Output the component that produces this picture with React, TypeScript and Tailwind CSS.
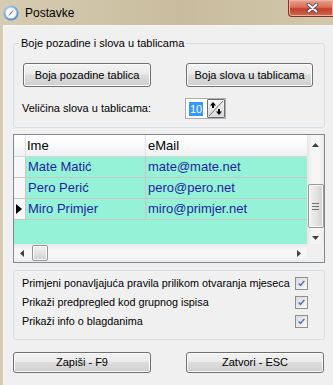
import { FC } from 'react'

const Btn: FC<{ label: string; className: string }> = ({ label, className }) => (
  <div
    className={`flex items-center justify-center border border-[#707070] rounded-[3px] bg-[linear-gradient(#f2f2f2,#ebebeb_45%,#dddddd_50%,#cfcfcf)] shadow-[inset_0_0_0_1px_#fbfbfb] text-[11px] text-black whitespace-nowrap ${className}`}
  >
    {label}
  </div>
)

const Check: FC = () => (
  <span className="flex w-[13px] h-[13px] border border-[#8e8f8f] bg-[linear-gradient(135deg,#d8dbe0,#f7f8f9)] p-[1px]">
    <svg viewBox="0 0 11 11" className="w-full h-full">
      <path d="M2 5.5 L4.3 8 L9 2.3" stroke="#4e6aa8" strokeWidth="1.7" fill="none" />
    </svg>
  </span>
)

const rows = [
  { ime: 'Mate Matić', mail: 'mate@mate.net' },
  { ime: 'Pero Perić', mail: 'pero@pero.net' },
  { ime: 'Miro Primjer', mail: 'miro@primjer.net', current: true },
]

const App: FC = () => {
  return (
    <div className="w-[333px] h-[385px] overflow-hidden flex flex-col bg-[linear-gradient(90deg,#d6ccb2,#c9bc9e_55%,#d2c7ac)] font-['Liberation_Sans',sans-serif] text-black">
      {/* title bar */}
      <div className="h-[25px] shrink-0 flex items-start relative">
        <svg viewBox="0 0 16 16" className="w-[16px] h-[16px] ml-[3px] mt-[5px]">
          <defs>
            <radialGradient id="rim" cx="0.4" cy="0.35" r="0.7">
              <stop offset="0" stopColor="#d8ecff" />
              <stop offset="1" stopColor="#3f7fd0" />
            </radialGradient>
          </defs>
          <circle cx="8" cy="8" r="7.5" fill="url(#rim)" />
          <circle cx="8" cy="8" r="5.6" fill="#f7fbff" stroke="#9cc2ea" strokeWidth="0.6" />
          <path d="M11 4.5 L8.4 8.4 L7.6 7.6 Z" fill="#d23b2b" />
          <path d="M5 11.5 L7.6 7.6 L8.4 8.4 Z" fill="#3a6fc0" />
        </svg>
        <span className="ml-[6px] mt-[5px] text-[12px] leading-[16px] text-black">Postavke</span>
        <div className="absolute left-[288px] top-0 w-[46px] h-[17px] rounded-bl-[4px] border border-t-0 border-[#7d3427] bg-[linear-gradient(#e8a08f,#d9705a_45%,#c2402a_55%,#d3684e)] shadow-[inset_0_0_0_1px_#f0b2a2] flex items-center justify-center">
          <svg viewBox="0 0 12 10" className="w-[13px] h-[10px] ml-[2px]">
            <path d="M2 1.5 L10 8.5 M10 1.5 L2 8.5" stroke="#3d3d4a" strokeWidth="3.6" strokeLinecap="round" />
            <path d="M2 1.5 L10 8.5 M10 1.5 L2 8.5" stroke="#ffffff" strokeWidth="2" strokeLinecap="round" />
          </svg>
        </div>
      </div>

      {/* body */}
      <div className="flex-1 flex pl-[3px]">
        <div className="flex-1 bg-[#f0f0f0] border-l border-t border-[#f7f5f0] flex flex-col">
          {/* group 1 */}
          <div className="relative ml-[9px] mt-[17px] w-[312px] h-[85px] border border-[#d5dfe5] rounded-[3px] flex flex-col">
            <span className="absolute left-[5px] top-[-8px] px-[2px] bg-[#f0f0f0] text-[11px] leading-[14px] whitespace-nowrap">
              Boje pozadine i slova u tablicama
            </span>
            <div className="flex mt-[19px]">
              <Btn label="Boja pozadine tablica" className="ml-[9px] w-[128px] h-[24px]" />
              <Btn label="Boja slova u tablicama" className="ml-[35px] w-[127px] h-[24px]" />
            </div>
            <div className="flex items-center mt-[11px]">
              <span className="ml-[8px] w-[163px] text-[11px] whitespace-nowrap">Veličina slova u tablicama:</span>
              <div className="w-[41px] h-[21px] border border-[#abadb3] bg-white flex items-center pl-[3px]">
                <span className="bg-[#3399ff] text-white text-[11px] leading-[14px] px-[1px]">10</span>
                <div className="ml-auto w-[18px] h-[19px] border border-[#6f6f6f] rounded-[1px] bg-[linear-gradient(#f4f4f4,#dadada)]">
                  <svg viewBox="0 0 16 17" className="w-full h-full">
                    <path d="M1 16 L15 1" stroke="#707070" strokeWidth="1" />
                    <path d="M5 2 L8 5.5 L6 5.5 L6 8 L4 8 L4 5.5 L2 5.5 Z" fill="#000" />
                    <path d="M11 15 L8 11.5 L10 11.5 L10 9 L12 9 L12 11.5 L14 11.5 Z" fill="#000" />
                  </svg>
                </div>
              </div>
            </div>
          </div>

          {/* grid */}
          <div className="ml-[9px] mt-[6px] w-[312px] h-[129px] border border-[#828790] flex flex-col bg-[#95f2d6]">
            <div className="flex flex-1 min-h-0">
              <div className="flex-1 flex flex-col">
                <div className="h-[22px] flex bg-[linear-gradient(#ffffff,#f7f8f9_60%,#eef0f2)] border-b border-[#d5d5d5] text-[13px]">
                  <div className="w-[12px] border-r border-[#e2e2e2]" />
                  <div className="w-[120px] border-r border-[#e2e2e2] pl-[1px] flex items-center">Ime</div>
                  <div className="flex-1 pl-[2px] flex items-center">eMail</div>
                </div>
                {rows.map((r) => (
                  <div key={r.ime} className="h-[21px] flex border-b border-[#c4c9c7] text-[13px] text-[#1f1fa0]">
                    <div className="w-[12px] bg-[#f7f7f7] border-r border-[#c4c9c7] flex items-center">
                      {r.current && (
                        <svg viewBox="0 0 6 10" className="w-[6px] h-[10px] ml-[2px]">
                          <path d="M0 0 L6 5 L0 10 Z" fill="#000" />
                        </svg>
                      )}
                    </div>
                    <div className="w-[120px] border-r border-[#c4c9c7] pl-[2px] flex items-center">{r.ime}</div>
                    <div className="flex-1 pl-[2px] flex items-center">{r.mail}</div>
                  </div>
                ))}
              </div>
              {/* vertical scrollbar */}
              <div className="w-[17px] bg-[linear-gradient(90deg,#e6e6e6,#f6f6f6_30%,#f6f6f6_70%,#ebebeb)] flex flex-col items-center">
                <svg viewBox="0 0 7 4" className="w-[7px] h-[4px] mt-[8px]">
                  <path d="M0 4 L3.5 0 L7 4 Z" fill="#404040" />
                </svg>
                <div className="mt-[37px] w-[16px] h-[44px] border border-[#979797] rounded-[2px] bg-[linear-gradient(90deg,#f2f2f2,#e4e4e4_50%,#cfcfcf)] shadow-[inset_0_0_0_1px_#fafafa] flex flex-col items-center justify-center gap-[2px]">
                  <span className="w-[7px] h-[1px] bg-[#6f6f6f]" />
                  <span className="w-[7px] h-[1px] bg-[#6f6f6f]" />
                  <span className="w-[7px] h-[1px] bg-[#6f6f6f]" />
                </div>
                <svg viewBox="0 0 7 4" className="w-[7px] h-[4px] mt-[8px]">
                  <path d="M0 0 L3.5 4 L7 0 Z" fill="#404040" />
                </svg>
              </div>
            </div>
            {/* horizontal scrollbar */}
            <div className="h-[18px] flex">
              <div className="flex-1 flex items-center bg-[linear-gradient(#e8e8e8,#f6f6f6_30%,#f6f6f6_70%,#ececec)]">
                <svg viewBox="0 0 4 7" className="w-[4px] h-[7px] ml-[6px]">
                  <path d="M4 0 L0 3.5 L4 7 Z" fill="#404040" />
                </svg>
                <div className="ml-[8px] w-[16px] h-[16px] border border-[#979797] rounded-[2px] bg-[linear-gradient(#f2f2f2,#e4e4e4_50%,#cfcfcf)] shadow-[inset_0_0_0_1px_#fafafa]" />
                <svg viewBox="0 0 4 7" className="w-[4px] h-[7px] ml-auto mr-[6px]">
                  <path d="M0 0 L4 3.5 L0 7 Z" fill="#404040" />
                </svg>
              </div>
              <div className="w-[17px] bg-[#f0f0f0]" />
            </div>
          </div>

          {/* group 2 */}
          <div className="ml-[9px] mt-[7px] w-[312px] h-[70px] border border-[#d5dfe5] rounded-[3px] flex flex-col pt-[3px] text-[10.8px]">
            {[
              'Primjeni ponavljajuća pravila prilikom otvaranja mjeseca',
              'Prikaži predpregled kod grupnog ispisa',
              'Prikaži info o blagdanima',
            ].map((t) => (
              <div key={t} className="h-[19px] flex items-center">
                <span className="ml-[8px] flex-1 whitespace-nowrap">{t}</span>
                <span className="mr-[16px]">
                  <Check />
                </span>
              </div>
            ))}
          </div>

          {/* bottom buttons */}
          <div className="flex mt-[12px]">
            <Btn label="Zapiši - F9" className="ml-[9px] w-[138px] h-[21px]" />
            <Btn label="Zatvori - ESC" className="ml-[35px] w-[138px] h-[21px]" />
          </div>
        </div>
      </div>
    </div>
  )
}

export default App
